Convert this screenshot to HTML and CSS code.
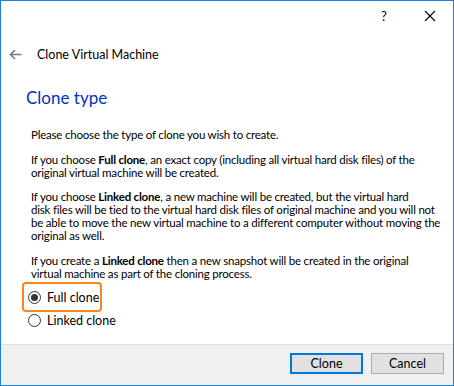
FILE: index.html
```html
<!DOCTYPE html>
<html lang="en">
<head>
  <meta charset="UTF-8">
  <meta name="viewport" content="width=device-width, initial-scale=1.0">
  <title>Clone Virtual Machine</title>
  <link rel="stylesheet" href="styles.css">
</head>
<body>
  <div class="window">
    <div class="titlebar">
      <span class="title-btn help">?</span>
      <span class="title-btn close">
        <svg width="12" height="12" viewBox="0 0 12 12"><path d="M1 1 L11 11 M11 1 L1 11" stroke="#000" stroke-width="1.1" fill="none"/></svg>
      </span>
    </div>
    <div class="header">
      <svg class="back" width="13" height="11" viewBox="0 0 13 11"><path d="M12.5 5.5 H1.5 M6 1 L1.5 5.5 L6 10" stroke="#7a7a7a" stroke-width="1.6" fill="none"/></svg>
      <span class="header-title">Clone Virtual Machine</span>
    </div>
    <div class="main">
      <h1>Clone type</h1>
      <div class="text">
        <p>Please choose the type of clone you wish to create.</p>
        <p>If you choose <b>Full clone</b>, an exact copy (including all virtual hard disk files) of the<br>original virtual machine will be created.</p>
        <p>If you choose <b>Linked clone</b>, a new machine will be created, but the virtual hard<br>disk files will be tied to the virtual hard disk files of original machine and you will not<br>be able to move the new virtual machine to a different computer without moving the<br>original as well.</p>
        <p>If you create a <b>Linked clone</b> then a new snapshot will be created in the original<br>virtual machine as part of the cloning process.</p>
      </div>
      <div class="options">
        <div class="option selected">
          <span class="radio checked"></span>
          <span>Full clone</span>
          <span class="highlight"></span>
        </div>
        <div class="option">
          <span class="radio"></span>
          <span>Linked clone</span>
        </div>
      </div>
    </div>
    <div class="footer">
      <button class="btn default">Clone</button>
      <button class="btn">Cancel</button>
    </div>
  </div>
</body>
</html>
```

FILE: styles.css
```css
body {
  margin: 0;
  font-family: Lato, "Liberation Sans", sans-serif;
  font-size: 12px;
  color: #000;
  background: #fff;
}
.window {
  width: 454px;
  height: 386px;
  box-sizing: border-box;
  border: 1px solid #1a82d6;
  display: flex;
  flex-direction: column;
  background: #fff;
  overflow: hidden;
}
.window > * {
  flex-shrink: 0;
}
.titlebar {
  height: 30px;
  display: flex;
  justify-content: flex-end;
  align-items: center;
}
.title-btn {
  width: 46px;
  height: 30px;
  display: flex;
  align-items: center;
  justify-content: center;
}
.help {
  font-size: 13px;
}
.header {
  height: 26px;
  margin-top: 10px;
  display: flex;
  align-items: center;
}
.back {
  margin-left: 8px;
}
.header-title {
  margin-left: 15px;
  font-size: 12.5px;
}
.main {
  flex: 1;
  flex-shrink: 1;
  min-height: 0;
}
h1 {
  margin: 21px 0 0 25px;
  font-size: 17px;
  font-weight: normal;
  line-height: 20px;
  color: #0033bc;
}
.text {
  margin: 20px 0 0 30px;
  line-height: 13px;
  font-size: 11.5px;
  letter-spacing: -0.2px;
  white-space: nowrap;
}
.text p {
  margin: 0 0 11.5px 0;
}
.text p:last-child {
  margin-bottom: 0;
}
.text b {
  font-weight: bold;
}
.options {
  margin: 6px 0 0 27px;
}
.option {
  position: relative;
  height: 23px;
  display: flex;
  align-items: center;
  gap: 6px;
  font-size: 12.5px;
}
.radio {
  width: 11px;
  height: 11px;
  border: 1px solid #333;
  border-radius: 50%;
  position: relative;
  background: #fff;
}
.radio.checked::after {
  content: "";
  position: absolute;
  left: 2px;
  top: 2px;
  width: 7px;
  height: 7px;
  border-radius: 50%;
  background: #333;
}
.highlight {
  position: absolute;
  left: -6px;
  top: -4px;
  width: 76px;
  height: 26px;
  border: 2.5px solid #f7861c;
  border-radius: 4px;
}
.footer {
  height: 41px;
  box-sizing: border-box;
  border-top: 1px solid #dfdfdf;
  background: #f0f0f0;
  display: flex;
  justify-content: flex-end;
  align-items: flex-start;
  gap: 8px;
  padding: 8px 9px 0 0;
}
.btn {
  width: 73px;
  height: 21px;
  box-sizing: border-box;
  background: #e1e1e1;
  border: 1px solid #adadad;
  font-family: inherit;
  font-size: 12.5px;
  padding: 0;
  color: #000;
}
.btn.default {
  border: 2px solid #0078d7;
}
```
